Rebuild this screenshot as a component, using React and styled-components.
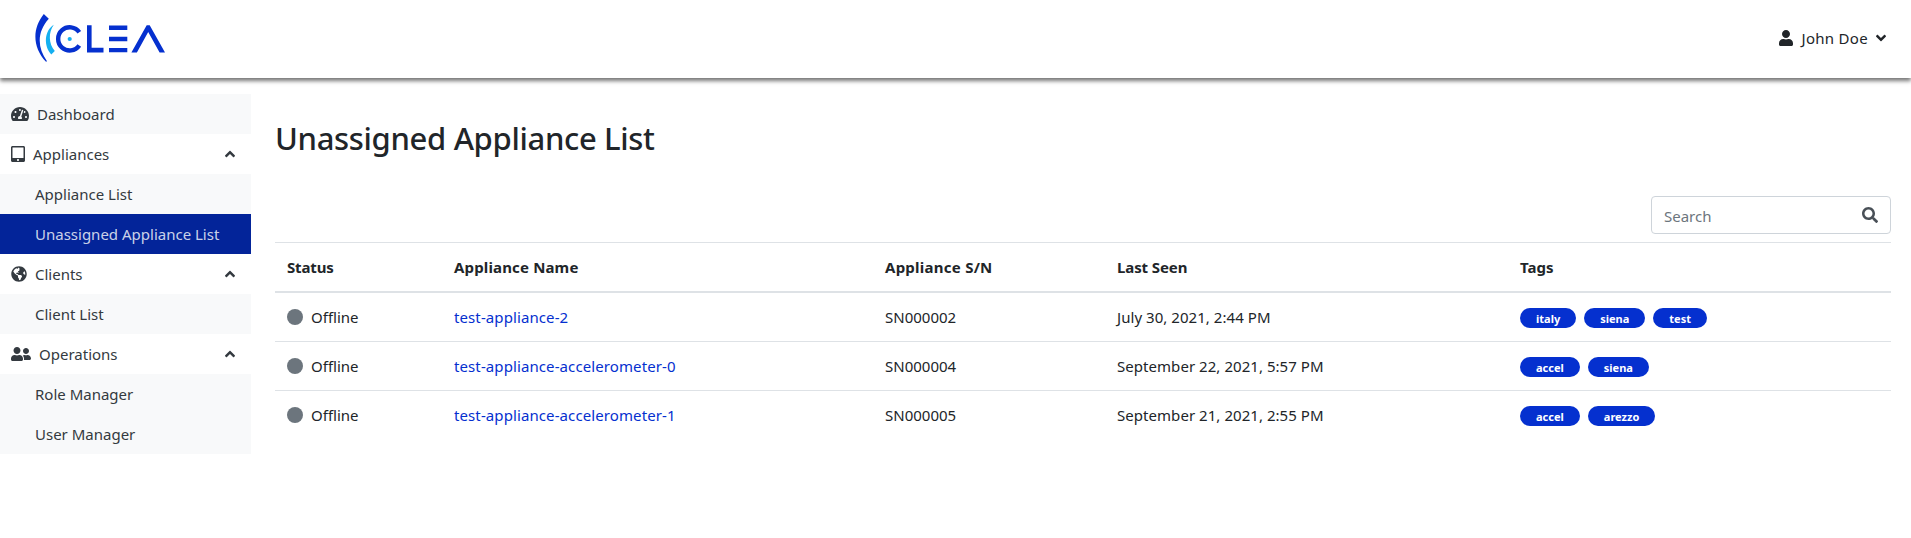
import React from "react";
import styled, { createGlobalStyle } from "styled-components";
import {
  FaTachometerAlt,
  FaTabletAlt,
  FaGlobeAmericas,
  FaUserFriends,
  FaUser,
  FaSearch,
  FaAngleUp,
  FaAngleDown,
} from "react-icons/fa";

const GlobalStyle = createGlobalStyle`
  *, *::before, *::after { box-sizing: border-box; }
  body {
    margin: 0;
    background: #fff;
    color: #212529;
    font: 400 15px/24px "Noto Sans", "Open Sans", sans-serif;
  }
`;

const Header = styled.header`
  display: flex;
  align-items: center;
  justify-content: space-between;
  height: 78px;
  padding: 0 25px 0 34px;
  background: #fff;
  box-shadow: 0 3px 4px #777;
`;

const Logo = styled.svg`
  display: block;
  width: 132px;
  height: 50px;
  margin-bottom: 2px;
`;

const Glyph = styled.span`
  flex: none;
  display: flex;
  width: ${(p) => p.$width}px;
  height: 16px;

  svg {
    width: 100%;
    height: 100%;
  }
`;

const UserMenu = styled.div`
  display: flex;
  align-items: center;
  margin-top: -2px;
  letter-spacing: 0.3px;
`;

const UserName = styled.span`
  margin: 0 8px 0 9px;
`;

const Layout = styled.div`
  display: flex;
  align-items: flex-start;
  padding-top: 16px;
`;

const Sidebar = styled.nav`
  flex: none;
  width: 251px;
  color: #343a40;
`;

const NavRow = styled.div`
  display: flex;
  align-items: center;
  height: 40px;
  padding: 0 16px 0 11px;
  background: ${(p) => (p.$shaded ? "#f8f9fa" : "#fff")};
`;

const NavLabel = styled.span`
  flex: 1;
  margin-left: 8px;
`;

const NavLink = styled.div`
  height: 40px;
  padding: 8px 0 8px 35px;
  white-space: nowrap;
  color: ${(p) => (p.$active ? "rgba(255, 255, 255, 0.8)" : "inherit")};
  background: ${(p) => (p.$active ? "#032499" : "#f8f9fa")};
`;

const Main = styled.main`
  flex: 1;
  padding: 25px 20px 0 24px;
`;

const Title = styled.h2`
  margin: 0 0 39px;
  font-size: 31px;
  font-weight: 500;
  line-height: 38px;
  letter-spacing: -0.33px;
`;

const SearchBox = styled.div`
  display: flex;
  align-items: center;
  width: 240px;
  height: 38px;
  margin: 0 0 8px auto;
  padding: 0 12px;
  border: 1px solid #ced4da;
  border-radius: 4px;
  color: #495057;
`;

const SearchInput = styled.input`
  flex: 1;
  min-width: 0;
  padding: 2px 0 0;
  border: 0;
  outline: 0;
  font: inherit;
  background: transparent;
  &::placeholder {
    color: #6c757d;
    opacity: 1;
  }
`;

const Table = styled.table`
  width: 100%;
  table-layout: fixed;
  border-spacing: 0;
`;

const Col = styled.col`
  width: ${(p) => p.$width}px;
`;

const Th = styled.th`
  padding: 12px;
  border-top: 1px solid #dee2e6;
  border-bottom: 2px solid #dee2e6;
  font-weight: 700;
  text-align: left;
  letter-spacing: ${(p) => p.$tracking || 0}px;
`;

const Td = styled.td`
  height: ${(p) => (p.$first ? 48 : 49)}px;
  padding: 12px;
  border-top: ${(p) => (p.$first ? "0" : "1px solid #dee2e6")};
`;

const Status = styled.div`
  display: flex;
  align-items: center;
  gap: 8px;
`;

const Dot = styled.span`
  width: 16px;
  height: 16px;
  border-radius: 50%;
  background: #6c757d;
`;

const ApplianceLink = styled.a`
  color: #0530cf;
  letter-spacing: 0.1px;
`;

const LastSeen = styled.span`
  letter-spacing: 0.05px;
`;

const Tags = styled.div`
  display: flex;
  align-items: center;
  gap: 8px;
  height: 24px;
  padding-top: 2px;
`;

const Tag = styled.span`
  height: 20px;
  padding: 1px 16px 0;
  border-radius: 10px;
  color: #fff;
  background: #0530cf;
  font-size: 11px;
  font-weight: 700;
  line-height: 19px;
`;

const MENU = [
  { label: "Dashboard", icon: FaTachometerAlt, width: 18, links: null },
  {
    label: "Appliances",
    icon: FaTabletAlt,
    width: 14,
    links: ["Appliance List", "Unassigned Appliance List"],
  },
  { label: "Clients", icon: FaGlobeAmericas, width: 16, links: ["Client List"] },
  {
    label: "Operations",
    icon: FaUserFriends,
    width: 20,
    links: ["Role Manager", "User Manager"],
  },
];

const COLUMNS = [
  { label: "Status", width: 167, tracking: -0.15 },
  { label: "Appliance Name", width: 431, tracking: 0.15 },
  { label: "Appliance S/N", width: 232, tracking: 0.25 },
  { label: "Last Seen", width: 403, tracking: -0.1 },
  { label: "Tags", width: 383 },
];

const ROWS = [
  ["test-appliance-2", "SN000002", "July 30, 2021, 2:44 PM", ["italy", "siena", "test"]],
  ["test-appliance-accelerometer-0", "SN000004", "September 22, 2021, 5:57 PM", ["accel", "siena"]],
  ["test-appliance-accelerometer-1", "SN000005", "September 21, 2021, 2:55 PM", ["accel", "arezzo"]],
];

function CleaLogo() {
  return (
    <Logo viewBox="34 13 132 50" role="img" aria-label="Clea">
      <g fill="#0530cf">
        <path d="M43.8 14C32 29 32.5 47 46 61.8L47 61.3C37 47 37 32 48.8 18.8Z" />
        <path d="M87 25.3H91.6V47.8H103.5V52.4H87Z" />
        <path d="M109 25.6H127.3V30H109ZM109 36.8H127.3V41.2H109ZM109 47.9H127.3V52.3H109Z" />
        <path d="M131.4 52.4L146.7 25.3H149.7L165 52.4H159.6L148.2 32L136.9 52.4Z" />
      </g>
      <path d="M53.8 24.8C44 31 43.5 46 51.3 54.6L54.8 51C48.5 44 48.3 32 53.8 24.8Z" fill="#14aff0" />
      <path d="M79.3 32.3A11.6 11.6 0 1 0 79.3 45.5" fill="none" stroke="#0530cf" strokeWidth="4.4" />
      <circle cx="69.7" cy="39" r="2.1" fill="#14aff0" />
    </Logo>
  );
}

function NavGroup({ label, icon: Icon, width, links }) {
  return (
    <>
      <NavRow $shaded={!links}>
        <Glyph $width={width}>
          <Icon />
        </Glyph>
        <NavLabel>{label}</NavLabel>
        {links && (
          <Glyph $width={10}>
            <FaAngleUp />
          </Glyph>
        )}
      </NavRow>
      {links?.map((link) => (
        <NavLink key={link} $active={link === "Unassigned Appliance List"}>
          {link}
        </NavLink>
      ))}
    </>
  );
}

export default function App() {
  return (
    <>
      <GlobalStyle />
      <Header>
        <CleaLogo />
        <UserMenu>
          <Glyph $width={14}>
            <FaUser />
          </Glyph>
          <UserName>John Doe</UserName>
          <Glyph $width={10}>
            <FaAngleDown />
          </Glyph>
        </UserMenu>
      </Header>
      <Layout>
        <Sidebar>
          {MENU.map((group) => (
            <NavGroup key={group.label} {...group} />
          ))}
        </Sidebar>
        <Main>
          <Title>Unassigned Appliance List</Title>
          <SearchBox>
            <SearchInput placeholder="Search" />
            <Glyph $width={16}>
              <FaSearch />
            </Glyph>
          </SearchBox>
          <Table>
            <colgroup>
              {COLUMNS.map((c) => (
                <Col key={c.label} $width={c.width} />
              ))}
            </colgroup>
            <thead>
              <tr>
                {COLUMNS.map((c) => (
                  <Th key={c.label} $tracking={c.tracking}>
                    {c.label}
                  </Th>
                ))}
              </tr>
            </thead>
            <tbody>
              {ROWS.map(([name, serial, seen, tags], i) => (
                <tr key={name}>
                  <Td $first={i === 0}>
                    <Status>
                      <Dot />
                      Offline
                    </Status>
                  </Td>
                  <Td $first={i === 0}>
                    <ApplianceLink>{name}</ApplianceLink>
                  </Td>
                  <Td $first={i === 0}>{serial}</Td>
                  <Td $first={i === 0}>
                    <LastSeen>{seen}</LastSeen>
                  </Td>
                  <Td $first={i === 0}>
                    <Tags>
                      {tags.map((tag) => (
                        <Tag key={tag}>{tag}</Tag>
                      ))}
                    </Tags>
                  </Td>
                </tr>
              ))}
            </tbody>
          </Table>
        </Main>
      </Layout>
    </>
  );
}
